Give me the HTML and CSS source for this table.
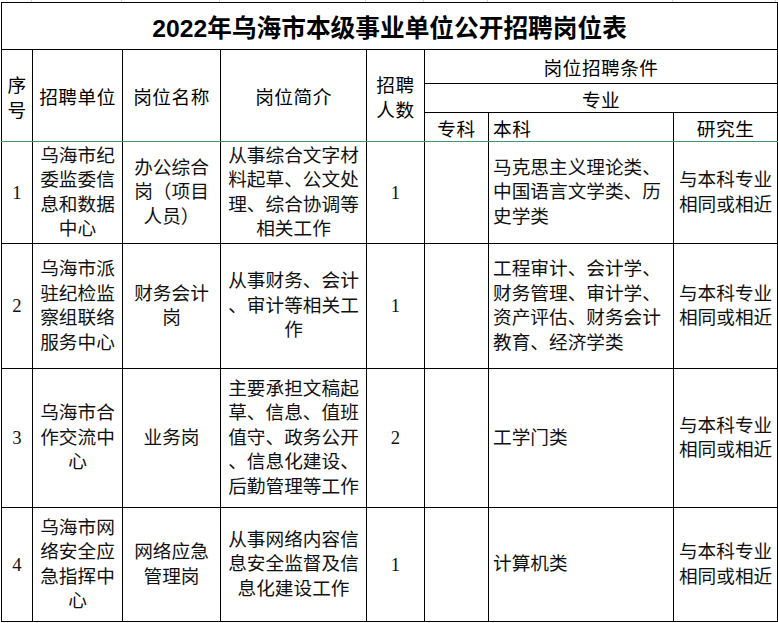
FILE: index.html
```html
<!DOCTYPE html>
<html lang="zh-CN">
<head>
<meta charset="utf-8">
<title>2022年乌海市本级事业单位公开招聘岗位表</title>
<link rel="stylesheet" href="styles.css">
</head>
<body>
<div class="sheet">
  <div class="gridstrip">
    <span class="g g1"></span><span class="g g2"></span><span class="g g3"></span><span class="g g4"></span><span class="g g5"></span><span class="g g6"></span><span class="g g7"></span><span class="g g8"></span>
  </div>
  <table class="posts">
    <colgroup>
      <col class="c1"><col class="c2"><col class="c3"><col class="c4"><col class="c5"><col class="c6"><col class="c7"><col class="c8">
    </colgroup>
    <tr class="r-title">
      <td colspan="8" class="title">2022年乌海市本级事业单位公开招聘岗位表</td>
    </tr>
    <tr class="r-h1">
      <td rowspan="3" class="hd last">序<br>号</td>
      <td rowspan="3" class="hd last">招聘单位</td>
      <td rowspan="3" class="hd last">岗位名称</td>
      <td rowspan="3" class="hd last">岗位简介</td>
      <td rowspan="3" class="hd last">招聘<br>人数</td>
      <td colspan="3" class="hd">岗位招聘条件</td>
    </tr>
    <tr class="r-h2">
      <td colspan="3" class="hd">专业</td>
    </tr>
    <tr class="r-h3">
      <td class="hd last">专科</td>
      <td class="hd last left">本科</td>
      <td class="hd last">研究生</td>
    </tr>
    <tr class="r1">
      <td class="num">1</td>
      <td class="txt">乌海市纪<br>委监委信<br>息和数据<br>中心</td>
      <td class="txt">办公综合<br>岗（项目<br>人员）</td>
      <td class="txt">从事综合文字材<br>料起草、公文处<br>理、综合协调等<br>相关工作</td>
      <td class="num">1</td>
      <td class="txt"></td>
      <td class="txt left">马克思主义理论类、<br>中国语言文学类、历<br>史学类</td>
      <td class="txt">与本科专业<br>相同或相近</td>
    </tr>
    <tr class="r2">
      <td class="num">2</td>
      <td class="txt">乌海市派<br>驻纪检监<br>察组联络<br>服务中心</td>
      <td class="txt">财务会计<br>岗</td>
      <td class="txt">从事财务、会计<br>、审计等相关工<br>作</td>
      <td class="num">1</td>
      <td class="txt"></td>
      <td class="txt left">工程审计、会计学、<br>财务管理、审计学、<br>资产评估、财务会计<br>教育、经济学类</td>
      <td class="txt">与本科专业<br>相同或相近</td>
    </tr>
    <tr class="r3">
      <td class="num">3</td>
      <td class="txt">乌海市合<br>作交流中<br>心</td>
      <td class="txt">业务岗</td>
      <td class="txt">主要承担文稿起<br>草、信息、值班<br>值守、政务公开<br>、信息化建设、<br>后勤管理等工作</td>
      <td class="num">2</td>
      <td class="txt"></td>
      <td class="txt left">工学门类</td>
      <td class="txt">与本科专业<br>相同或相近</td>
    </tr>
    <tr class="r4">
      <td class="num">4</td>
      <td class="txt">乌海市网<br>络安全应<br>急指挥中<br>心</td>
      <td class="txt">网络应急<br>管理岗</td>
      <td class="txt">从事网络内容信<br>息安全监督及信<br>息化建设工作</td>
      <td class="num">1</td>
      <td class="txt"></td>
      <td class="txt left">计算机类</td>
      <td class="txt">与本科专业<br>相同或相近</td>
    </tr>
  </table>
</div>
</body>
</html>
```
FILE: styles.css
```css
html, body {
  margin: 0;
  padding: 0;
  background: #ffffff;
}

.sheet {
  padding-left: 1px;
  width: 777px;
}

.gridstrip {
  height: 2px;
  display: grid;
  grid-template-columns: 31px 90px 98px 146px 58px 64px 185px 103px;
}

.gridstrip .g {
  border-right: 1px solid #d4d4d4;
  box-sizing: border-box;
}

.posts {
  border-collapse: collapse;
  table-layout: fixed;
  width: 776px;
  color: #111;
}

.c1 { width: 31px; }
.c2 { width: 90px; }
.c3 { width: 98px; }
.c4 { width: 146px; }
.c5 { width: 58px; }
.c6 { width: 64px; }
.c7 { width: 185px; }
.c8 { width: 104px; }

.posts td {
  border: 1px solid #000;
  padding: 0;
  text-align: center;
  vertical-align: middle;
  white-space: nowrap;
  overflow: hidden;
}

.r-title { height: 47px; }
.r-h1 { height: 34px; }
.r-h2 { height: 29px; }
.r-h3 { height: 29px; }
.r1 { height: 102px; }
.r2 { height: 125px; }
.r3 { height: 139px; }
.r4 { height: 114px; }

.posts td.title {
  font-family: "Liberation Sans", "Noto Sans CJK SC", sans-serif;
  font-weight: 700;
  font-size: 24.7px;
  line-height: 28px;
  padding-top: 6px;
  color: #000;
}

.hd {
  font-family: "Noto Sans CJK SC", sans-serif;
  font-size: 18.67px;
  line-height: 25px;
  letter-spacing: 0.5px;
  color: #000;
}

.posts td.last {
  border-bottom: 1px solid #3d9b6f;
}

.num {
  font-family: "Liberation Serif", "Noto Sans CJK SC", serif;
  font-size: 18.67px;
  padding-top: 3px;
}

.txt {
  font-family: "Liberation Serif", "Noto Sans CJK SC", serif;
  font-size: 18.67px;
  line-height: 24.5px;
}

.posts td.left {
  text-align: left;
  padding-left: 4px;
}
```
